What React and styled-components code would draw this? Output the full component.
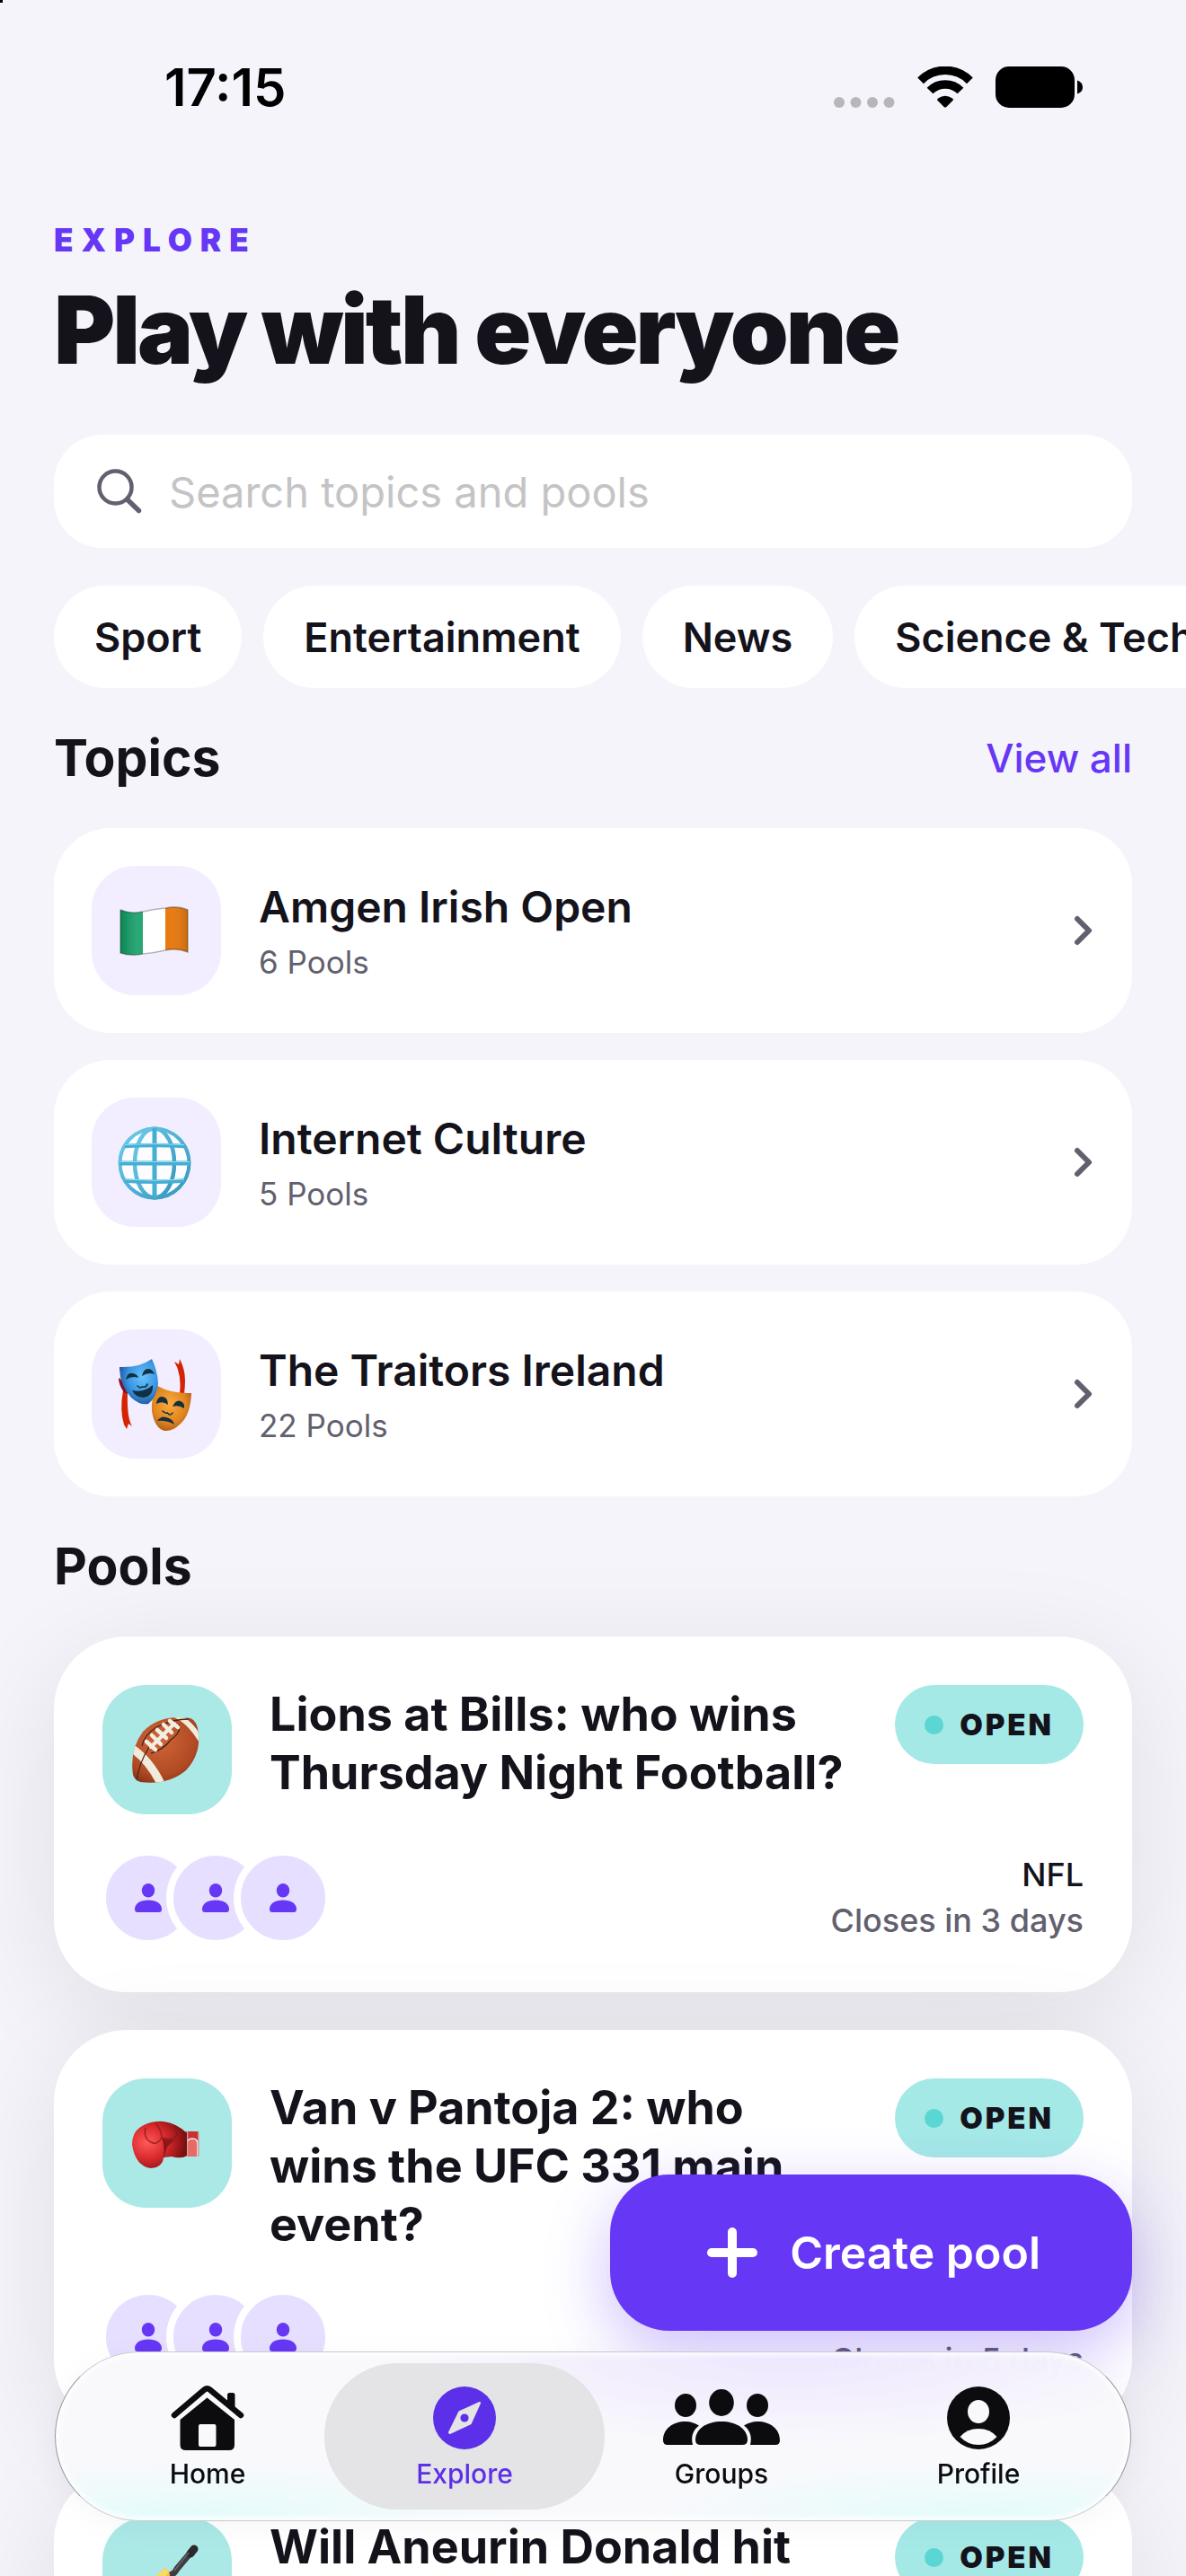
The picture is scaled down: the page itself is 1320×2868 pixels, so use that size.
import React, { useState } from 'react';
import styled, { createGlobalStyle } from 'styled-components';

const GlobalStyle = createGlobalStyle`
  * {
    box-sizing: border-box;
  }

  body {
    margin: 0;
    background: #f5f4fb;
    color: #14131b;
    font-family: Inter, 'Liberation Sans', sans-serif;
    -webkit-font-smoothing: antialiased;
  }

  button,
  input {
    font-family: inherit;
    color: inherit;
    border: none;
    background: none;
    padding: 0;
  }

  h1, h2, h3, p, ul {
    margin: 0;
    padding: 0;
  }
`;

const Screen = styled.div`
  position: relative;
  height: 100vh;
  overflow: hidden;
  display: flex;
  flex-direction: column;
`;

const CornerMark = styled.span`
  position: absolute;
  top: 0;
  left: 0;
  width: 3px;
  height: 3px;
  background: #000;
`;

const StatusBar = styled.div`
  flex: none;
  height: 193px;
  padding: 0 115px 0 183px;
  display: flex;
  align-items: center;
  justify-content: space-between;
  color: #000;
`;

const Clock = styled.time`
  font-size: 58px;
  font-weight: 600;
  line-height: 72px;
`;

const StatusIcons = styled.div`
  display: flex;
  align-items: center;
  gap: 25px;
`;

const Page = styled.main`
  flex: 1;
  min-height: 0;
  padding: 50px 60px 0;
`;

const Eyebrow = styled.p`
  color: #6637f5;
  font-size: 35px;
  font-weight: 900;
  letter-spacing: 9px;
  line-height: 48px;
  text-transform: uppercase;
`;

const PageTitle = styled.h1`
  margin-top: 16px;
  font-size: 104px;
  font-weight: 900;
  letter-spacing: -3px;
  line-height: 120px;
`;

const SearchBox = styled.label`
  margin-top: 57px;
  height: 126px;
  padding: 0 48px;
  border-radius: 54px;
  background: #fff;
  display: flex;
  align-items: center;
  gap: 30px;
`;

const SearchInput = styled.input`
  flex: 1;
  min-width: 0;
  height: 72px;
  font-size: 47px;
  outline: none;

  &::placeholder {
    color: #c4c4c6;
    opacity: 1;
  }
`;

const Chips = styled.div`
  margin: 42px -60px 0 0;
  display: flex;
  gap: 24px;
  overflow: hidden;
`;

const Chip = styled.button`
  flex: none;
  height: 114px;
  padding: 0 45px;
  border-radius: 57px;
  background: #fff;
  font-size: 45px;
  font-weight: 600;
  white-space: nowrap;
`;

const SectionHeader = styled.div`
  margin: 42px 0;
  display: flex;
  align-items: center;
  justify-content: space-between;
`;

const SectionTitle = styled.h2`
  font-size: 57px;
  font-weight: 700;
  line-height: 72px;
`;

const ViewAll = styled.a`
  color: #6637f5;
  font-size: 44px;
  font-weight: 500;
  text-decoration: none;
`;

const TopicList = styled.div`
  display: flex;
  flex-direction: column;
  gap: 30px;
`;

const TopicCard = styled.button`
  padding: 42px;
  border-radius: 63px;
  background: #fff;
  display: flex;
  align-items: center;
  gap: 42px;
  text-align: left;
`;

const Tile = styled.span`
  flex: none;
  width: 144px;
  height: 144px;
  border-radius: 48px;
  overflow: hidden;
  background: ${({ $teal }) => ($teal ? '#abe9e6' : '#f2eeff')};

  svg {
    display: block;
  }
`;

const TopicText = styled.span`
  flex: 1;
  display: flex;
  flex-direction: column;
`;

const TopicName = styled.span`
  font-size: 48px;
  font-weight: 600;
  line-height: 70px;
`;

const TopicCount = styled.span`
  color: #62606f;
  font-size: 35px;
  line-height: 52px;
`;

const PoolList = styled.div`
  display: flex;
  flex-direction: column;
  gap: 42px;
`;

const PoolCard = styled.article`
  padding: 54px;
  border-radius: 81px;
  background: #fff;
  box-shadow: 0 24px 120px rgba(20, 19, 27, 0.09);
`;

const PoolHeader = styled.div`
  display: flex;
  align-items: flex-start;
  gap: 42px;
`;

const PoolTitle = styled.h3`
  flex: 1;
  font-size: 52px;
  font-weight: 700;
  line-height: 65px;
  white-space: pre;
`;

const Badge = styled.span`
  flex: none;
  height: 88px;
  padding: 0 33px;
  border-radius: 44px;
  background: #a5e9e7;
  display: flex;
  align-items: center;
  gap: 18px;
  font-size: 33px;
  font-weight: 900;
  letter-spacing: 3px;

  &::before {
    content: '';
    width: 21px;
    height: 21px;
    border-radius: 50%;
    background: #5ad6d3;
  }
`;

const PoolFooter = styled.div`
  margin-top: 42px;
  display: flex;
  align-items: center;
  justify-content: space-between;
`;

const Avatars = styled.div`
  display: flex;
`;

const Avatar = styled.span`
  width: 102px;
  height: 102px;
  border: 4px solid #fff;
  border-radius: 50%;
  background: #e6dfff;
  box-shadow: 0 0 0 4px #fff;
  color: #6637f5;
  display: flex;
  align-items: center;
  justify-content: center;

  & + & {
    margin-left: -27px;
  }
`;

const PoolMeta = styled.div`
  font-size: 36px;
  font-weight: 500;
  line-height: 51px;
  text-align: right;
`;

const Closes = styled.p`
  color: #62606f;
`;

const CreateButton = styled.button`
  position: absolute;
  right: 60px;
  bottom: 273px;
  height: 174px;
  padding: 0 102px 0 108px;
  border-radius: 66px;
  background: #6637f5;
  box-shadow: 0 24px 72px rgba(102, 55, 245, 0.32);
  color: #fff;
  display: flex;
  align-items: center;
  gap: 36px;
  font-size: 50px;
  font-weight: 600;
`;

const TabBar = styled.nav`
  position: absolute;
  left: 61px;
  right: 61px;
  bottom: 61px;
  height: 189px;
  padding: 12px 26px;
  border: 1px solid #c9c8ce;
  border-left-color: #98979c;
  border-right-color: #98979c;
  border-radius: 95px;
  background:
    radial-gradient(ellipse at 68% 0, rgba(232, 222, 255, 0.7), transparent 40%),
    radial-gradient(ellipse at 12% 100%, rgba(222, 252, 250, 0.8), transparent 26%),
    radial-gradient(ellipse at 86% 100%, rgba(222, 252, 250, 0.8), transparent 26%),
    rgba(249, 249, 252, 0.96);
  box-shadow: inset 0 0 6px 3px rgba(255, 255, 255, 0.9), 0 6px 36px rgba(20, 19, 27, 0.04);
  backdrop-filter: blur(36px);
  display: flex;
`;

const Tab = styled.a`
  position: relative;
  z-index: 0;
  flex: 1;
  padding-top: 23px;
  color: ${({ $active }) => ($active ? '#5b30e8' : '#0c0c0e')};
  display: flex;
  flex-direction: column;
  align-items: center;
  gap: 4px;
  font-size: 30px;
  font-weight: 500;
  line-height: 40px;
  text-decoration: none;

  &::before {
    content: '';
    position: absolute;
    inset: 0 -13px;
    z-index: -1;
    border-radius: 81px;
    background: ${({ $active }) => ($active ? '#e4e4e6' : 'transparent')};
  }
`;

const TabIcon = styled.span`
  height: 76px;
  display: flex;
  align-items: center;
`;

const SignalIcon = () => (
  <svg width="68" height="46" viewBox="0 0 68 46" fill="#b7b6ba">
    <circle cx="6" cy="40" r="6" />
    <circle cx="24.500" cy="40" r="6" />
    <circle cx="43" cy="40" r="6" />
    <circle cx="61.500" cy="40" r="6" />
  </svg>
);

const WifiIcon = () => (
  <svg width="62" height="46" viewBox="0 0 62 46" fill="none" stroke="#000" strokeWidth="9.5">
    <path d="M3.6 15.8A38.5 38.5 0 0 1 58.4 15.8" />
    <path d="M14 27A24 24 0 0 1 48 27" />
    <path d="M22.4 37.8Q21.6 36.6 23 35.6Q31 30 39 35.6Q40.4 36.6 39.6 37.8L32.4 45Q31 46.2 29.6 45Z" fill="#000" stroke="none" />
  </svg>
);

const BatteryIcon = () => (
  <svg width="97" height="46" viewBox="0 0 97 46">
    <rect width="88" height="46" rx="15" />
    <path d="M91 15.5q6 2 6 7.5t-6 7.5z" />
  </svg>
);

const SearchIcon = () => (
  <svg width="50" height="50" viewBox="0 0 50 50" fill="none" stroke="#62606f" strokeLinecap="round">
    <circle cx="20.500" cy="20.500" r="18" strokeWidth="4.500" />
    <path d="M33.500 34L46.500 46.500" strokeWidth="5.500" />
  </svg>
);

const ChevronIcon = () => (
  <svg width="24" height="36" viewBox="0 0 24 36" fill="none" stroke="#62606f" strokeWidth="6" strokeLinecap="round" strokeLinejoin="round">
    <path d="M5 5L18 18L5 31" />
  </svg>
);

const PersonIcon = () => (
  <svg width="30" height="32" viewBox="0 0 30 32" fill="currentColor">
    <ellipse cx="15" cy="7.800" rx="7.200" ry="7.800" />
    <path d="M0 28.500C0 22.500 6 18.500 15 18.500S30 22.500 30 28.500Q30 32 27 32H3Q0 32 0 28.500Z" />
  </svg>
);

const PlusIcon = () => (
  <svg width="56" height="56" viewBox="0 0 56 56" stroke="#fff" strokeWidth="10" strokeLinecap="round">
    <path d="M28 5V51M5 28H51" />
  </svg>
);

const HomeIcon = () => (
  <svg width="84" height="74" viewBox="0 0 84 74" fill="currentColor">
    <path
      d="M5 34L38.500 5.500Q41.500 3 44.500 5.500L79 34"
      fill="none"
      stroke="currentColor"
      strokeWidth="6.500"
      strokeLinecap="round"
      strokeLinejoin="round"
    />
    <path d="M64 24V11.500Q64 9 66.500 9H70Q72.500 9 72.500 11.500V30Z" />
    <path
      fillRule="evenodd"
      d="M41.500 14.500L72 39V67Q72 73 66 73H18Q11.500 73 11.500 67V39ZM34 44Q32 44 32 46V67Q32 69 34 69H49.500Q51.500 69 51.500 67V46Q51.500 44 49.500 44Z"
    />
  </svg>
);

const CompassIcon = () => (
  <svg width="70" height="70" viewBox="0 0 70 70">
    <circle cx="35" cy="35" r="35" fill="currentColor" />
    <path
      d="M28.500 27.500L51 17.200Q53.600 16.600 52.800 19.200L42.500 42L19.500 52.800Q16.500 53.500 17.200 50.600Z"
      fill="#e4e4e6"
    />
    <circle cx="35" cy="35" r="4.600" fill="currentColor" />
  </svg>
);

const GroupsIcon = () => (
  <svg width="130" height="64" viewBox="0 0 130 64" fill="currentColor">
    <ellipse cx="65" cy="15" rx="13.800" ry="15" />
    <ellipse cx="25" cy="18" rx="12" ry="13" />
    <ellipse cx="105" cy="18" rx="12" ry="13" />
    <path d="M36 56.500C36 44 49 36 65 36S94 44 94 56.500Q94 62 88 62H42Q36 62 36 56.500Z" />
    <path d="M0 57C0 44 11 36 25 36Q33 36 40 40.500C34 45 30.500 52 33 62H5Q0 62 0 57Z" />
    <path d="M130 57C130 44 119 36 105 36Q97 36 90 40.500C96 45 99.500 52 97 62H125Q130 62 130 57Z" />
  </svg>
);

const ProfileIcon = () => (
  <svg width="70" height="70" viewBox="0 0 70 70">
    <circle cx="35" cy="35" r="35" fill="currentColor" />
    <ellipse cx="35" cy="28" rx="12" ry="13" fill="#f9f9fc" />
    <path d="M14.500 56Q22 47 35 47T55.500 56Q47 65 35 65T14.500 56Z" fill="#f9f9fc" />
  </svg>
);

const FlagEmoji = () => (
  <svg width="144" height="144" viewBox="0 0 144 144">
    <defs>
      <linearGradient id="flagShade" x1="0" x2="1">
        <stop offset="0" stopColor="#000" stopOpacity="0.16" />
        <stop offset="0.25" stopColor="#fff" stopOpacity="0.12" />
        <stop offset="0.7" stopColor="#fff" stopOpacity="0" />
        <stop offset="1" stopColor="#000" stopOpacity="0.14" />
      </linearGradient>
      <clipPath id="flagClip">
        <path d="M32 49Q44 54 57 51T82 47Q96 44 107 49V96Q95 91 82 94T57 98Q44 101 32 97Z" />
      </clipPath>
    </defs>
    <g clipPath="url(#flagClip)">
      <rect x="32" y="40" width="25" height="64" fill="#0f9d63" />
      <rect x="57" y="40" width="25" height="64" fill="#fff" />
      <rect x="82" y="40" width="26" height="64" fill="#e67a10" />
      <rect x="32" y="40" width="76" height="64" fill="url(#flagShade)" />
    </g>
    <path
      d="M32 49Q44 54 57 51T82 47Q96 44 107 49V96Q95 91 82 94T57 98Q44 101 32 97Z"
      fill="none"
      stroke="#000"
      strokeOpacity="0.28"
      strokeWidth="1.500"
    />
  </svg>
);

const GlobeEmoji = () => (
  <svg width="144" height="144" viewBox="0 0 144 144" fill="none">
    <defs>
      <linearGradient id="globeLine" x1="0" y1="0" x2="1" y2="1">
        <stop offset="0" stopColor="#6fcdea" />
        <stop offset="1" stopColor="#3595bd" />
      </linearGradient>
    </defs>
    <circle cx="70" cy="73" r="39" fill="#fdfdff" />
    <g stroke="#46aed2" strokeWidth="4.500">
      <circle cx="70" cy="73" r="38.500" stroke="url(#globeLine)" strokeWidth="4" />
      <ellipse cx="70" cy="73" rx="22" ry="38.500" stroke="url(#globeLine)" />
      <path d="M70 34V112" strokeWidth="5" />
      <path d="M31 73H109" strokeWidth="5" />
      <path d="M37 54Q70 52 103 54M37 92.500Q70 95 103 92.500" />
    </g>
    <path d="M31 71.500H109M37 52.500Q70 50.500 103 52.500M37 91Q70 93.500 103 91" stroke="#8fe0f5" strokeWidth="1" />
  </svg>
);

const MasksEmoji = () => (
  <svg width="144" height="144" viewBox="0 0 144 144">
    <defs>
      <radialGradient id="maskBlue" cx="0.6" cy="0.4" r="0.65">
        <stop offset="0" stopColor="#66c3fb" />
        <stop offset="0.6" stopColor="#3a94e2" />
        <stop offset="1" stopColor="#1d5196" />
      </radialGradient>
      <radialGradient id="maskGold" cx="0.45" cy="0.4" r="0.7">
        <stop offset="0" stopColor="#fbab3c" />
        <stop offset="0.6" stopColor="#e08420" />
        <stop offset="1" stopColor="#9c4c10" />
      </radialGradient>
    </defs>
    <path d="M31 54Q30 60 35 68Q31 90 36 106L39 111L41 105L45 108Q39 98 40 70L37 60Z" fill="#d42404" />
    <path d="M30 54Q30 62 36 70L40 72L37 62Z" fill="#7d1030" />
    <path d="M98 71Q100 55 95 42L92 36L97 39L98 33Q104 44 104 57Q104 64 103 72Z" fill="#d42404" />
    <path d="M73 63Q90 72 111 71Q110 95 99 105Q90 114 81 113Q70 110 67 91Q66 76 73 63Z" fill="url(#maskGold)" />
    <path d="M31 42Q53 43 67 33Q74 48 74 61Q72 76 63 83Q54 85 44 76Q31 62 31 42Z" fill="url(#maskBlue)" />
    <g fill="#12303f">
      <path d="M38 56Q40 47 46 49Q51 50 52 54Q45 51 38 56Z" />
      <path d="M56 52Q58 43 64 44Q68 45 70 50Q63 47 56 52Z" />
      <path d="M45 68Q58 71 68 62Q69 74 58 76Q49 76 45 68Z" />
      <path d="M72 83Q73 74 79 75Q85 76 85 84Q79 79 72 83Z" />
      <path d="M90 86Q94 78 99 80Q104 82 103 88Q97 84 90 86Z" />
      <path d="M73 102Q77 96 83 98Q91 100 92 106Q83 101 73 102Z" />
    </g>
    <g fill="none" stroke="#12303f" strokeWidth="1.600" strokeLinecap="round">
      <path d="M51 63Q54 66 56 64Q61 65 62 61" />
      <path d="M79 91Q82 94 84 93Q88 97 90 93" />
    </g>
  </svg>
);

const FootballEmoji = () => (
  <svg width="144" height="144" viewBox="0 0 144 144">
    <defs>
      <radialGradient id="ballShade" cx="0.42" cy="0.38" r="0.7">
        <stop offset="0" stopColor="#cf6637" />
        <stop offset="0.65" stopColor="#b14a24" />
        <stop offset="1" stopColor="#6e2710" />
      </radialGradient>
      <clipPath id="ballClip">
        <path d="M34 100Q30 72 45 52Q64 32 98 37Q106 40 107 55Q109 78 93 95Q73 112 42 108Q36 106 34 100Z" />
      </clipPath>
    </defs>
    <g clipPath="url(#ballClip)">
      <rect x="28" y="30" width="86" height="84" fill="url(#ballShade)" />
      <path d="M32 70Q53 84 66 112" fill="none" stroke="#f1ebdc" strokeWidth="9" />
      <path d="M80 33Q96 39 110 62" fill="none" stroke="#f1ebdc" strokeWidth="6" />
      <path d="M38 108Q40 88 52 69M96 38Q78 38 60 47Q46 56 44 68M85 44Q88 53 76 61Q68 72 54 76" fill="none" stroke="#4a2418" strokeWidth="1.300" />
    </g>
    <g stroke="#f3eee2" strokeLinecap="round" fill="none">
      <path d="M54 69L80 43" strokeWidth="4" />
      <path d="M49 63L59 72M55 56L65 66M61 50L71 59M68 44L77 53M75 40L84 47" strokeWidth="4.500" />
    </g>
  </svg>
);

const GloveEmoji = () => (
  <svg width="144" height="144" viewBox="0 0 144 144">
    <defs>
      <radialGradient id="gloveShade" cx="0.28" cy="0.45" r="0.7">
        <stop offset="0" stopColor="#ff5a58" />
        <stop offset="0.5" stopColor="#d92a2e" />
        <stop offset="1" stopColor="#7c0f10" />
      </radialGradient>
    </defs>
    <rect x="92" y="59" width="15" height="28" rx="1" fill="#c93030" />
    <path d="M94 87V73Q94 67 100 67T106 73V87" fill="#e86a66" stroke="#f2eeee" strokeWidth="1.500" />
    <path d="M94.500 59V87M107 59V87" stroke="#c9a9a5" strokeWidth="1.500" />
    <path d="M33 74Q33 58 46 52Q57 47 68 48Q83 50 94 61V86Q88 90 77 87L68 88Q67 99 54 100Q37 98 33 74Z" fill="url(#gloveShade)" />
    <path d="M48 55Q45 66 54 71Q61 75 66 66Q78 70 83 63M66 66Q73 74 68 88M59 50Q65 55 66 66M79 53Q84 58 82 64" fill="none" stroke="#84161a" strokeOpacity="0.7" strokeWidth="1.500" />
    <path d="M67 67Q76 70 84 67Q72 72 69 84Z" fill="#721012" fillOpacity="0.7" />
  </svg>
);

const CricketEmoji = () => (
  <svg width="144" height="144" viewBox="0 0 144 144">
    <path d="M69 56Q74 58 77 64L83 70Q70 96 44 112L33 101Q48 76 69 56Z" fill="#f2c141" />
    <path d="M69 56L74 60Q58 84 38 107L33 101Q48 76 69 56Z" fill="#fbd968" />
    <path d="M75 64Q80 63 83 57L99 38" fill="none" stroke="#3e3c40" strokeWidth="7" />
    <path d="M98 40L102 35" stroke="#2b292c" strokeWidth="9" strokeLinecap="round" />
    <path d="M80 59L96 39" stroke="#6b686c" strokeWidth="1.500" />
  </svg>
);

const chips = ['Sport', 'Entertainment', 'News', 'Science & Tech'];

const topics = [
  { name: 'Amgen Irish Open', pools: 6, Emoji: FlagEmoji },
  { name: 'Internet Culture', pools: 5, Emoji: GlobeEmoji },
  { name: 'The Traitors Ireland', pools: 22, Emoji: MasksEmoji },
];

const pools = [
  {
    title: 'Lions at Bills: who wins\nThursday Night Football?',
    topic: 'NFL',
    closes: 'Closes in 3 days',
    Emoji: FootballEmoji,
  },
  {
    title: 'Van v Pantoja 2: who\nwins the UFC 331 main\nevent?',
    topic: 'UFC',
    closes: 'Closes in 5 days',
    Emoji: GloveEmoji,
  },
  {
    title: 'Will Aneurin Donald hit',
    Emoji: CricketEmoji,
  },
];

const tabs = [
  { label: 'Home', Icon: HomeIcon },
  { label: 'Explore', Icon: CompassIcon },
  { label: 'Groups', Icon: GroupsIcon },
  { label: 'Profile', Icon: ProfileIcon },
];

const Pool = ({ title, topic, closes, Emoji }) => (
  <PoolCard>
    <PoolHeader>
      <Tile $teal>
        <Emoji />
      </Tile>
      <PoolTitle>{title}</PoolTitle>
      <Badge>OPEN</Badge>
    </PoolHeader>
    <PoolFooter>
      <Avatars>
        {[0, 1, 2].map((n) => (
          <Avatar key={n}>
            <PersonIcon />
          </Avatar>
        ))}
      </Avatars>
      {closes && (
        <PoolMeta>
          <p>{topic}</p>
          <Closes>{closes}</Closes>
        </PoolMeta>
      )}
    </PoolFooter>
  </PoolCard>
);

const App = () => {
  const [query, setQuery] = useState('');
  const [activeTab, setActiveTab] = useState('Explore');

  return (
    <Screen>
      <GlobalStyle />
      <CornerMark />
      <StatusBar>
        <Clock>17:15</Clock>
        <StatusIcons>
          <SignalIcon />
          <WifiIcon />
          <BatteryIcon />
        </StatusIcons>
      </StatusBar>

      <Page>
        <Eyebrow>Explore</Eyebrow>
        <PageTitle>Play with everyone</PageTitle>

        <SearchBox>
          <SearchIcon />
          <SearchInput
            type="text"
            aria-label="Search"
            placeholder="Search topics and pools"
            value={query}
            onChange={(e) => setQuery(e.target.value)}
          />
        </SearchBox>

        <Chips>
          {chips.map((chip) => (
            <Chip key={chip} type="button">{chip}</Chip>
          ))}
        </Chips>

        <SectionHeader>
          <SectionTitle>Topics</SectionTitle>
          <ViewAll href="#topics">View all</ViewAll>
        </SectionHeader>
        <TopicList>
          {topics.map(({ name, pools: count, Emoji }) => (
            <TopicCard key={name} type="button">
              <Tile>
                <Emoji />
              </Tile>
              <TopicText>
                <TopicName>{name}</TopicName>
                <TopicCount>{count} Pools</TopicCount>
              </TopicText>
              <ChevronIcon />
            </TopicCard>
          ))}
        </TopicList>

        <SectionHeader>
          <SectionTitle>Pools</SectionTitle>
        </SectionHeader>
        <PoolList>
          {pools.map((pool) => (
            <Pool key={pool.title} {...pool} />
          ))}
        </PoolList>
      </Page>

      <CreateButton type="button">
        <PlusIcon />
        Create pool
      </CreateButton>

      <TabBar>
        {tabs.map(({ label, Icon }) => (
          <Tab
            key={label}
            href={`#${label.toLowerCase()}`}
            $active={label === activeTab}
            onClick={() => setActiveTab(label)}
          >
            <TabIcon>
              <Icon />
            </TabIcon>
            {label}
          </Tab>
        ))}
      </TabBar>
    </Screen>
  );
};

export default App;
